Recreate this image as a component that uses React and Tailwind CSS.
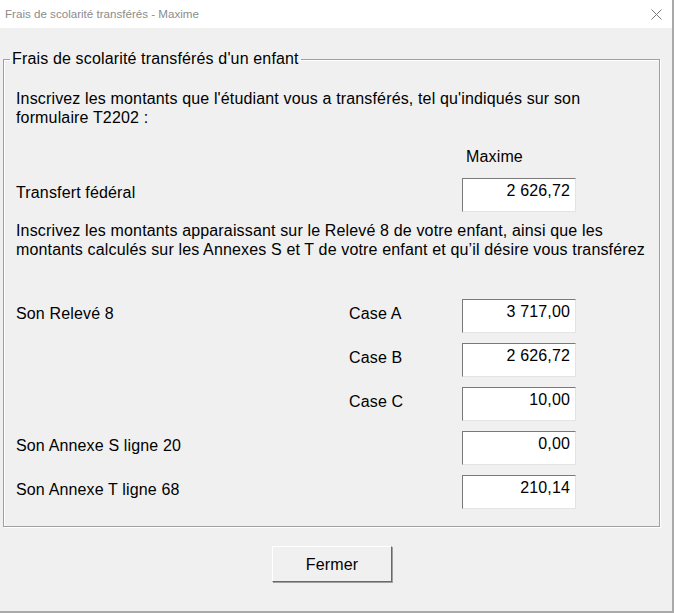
import React from "react";

// ── Data ───────────────────────────────────────────────────────────────────
const ROWS = [
  { label: "Son Relevé 8", sub: "Case A", value: "3 717,00" },
  { label: "", sub: "Case B", value: "2 626,72" },
  { label: "", sub: "Case C", value: "10,00" },
  { label: "Son Annexe S ligne 20", sub: "", value: "0,00" },
  { label: "Son Annexe T ligne 68", sub: "", value: "210,14" },
];

const FONT = "font-['Liberation_Sans',Arial,sans-serif]";

// ── Sub-components ─────────────────────────────────────────────────────────

function AmountBox({ value }) {
  return (
    <div className="w-[114px] h-[34px] bg-white border border-t-[#7a7a7a] border-l-[#7a7a7a] border-b-[#e3e3e3] border-r-[#e3e3e3] pt-[2px] pr-[5px] text-right leading-[19px] shrink-0">
      {value}
    </div>
  );
}

function Row({ label, sub, value, className = "" }) {
  return (
    <div className={`flex items-start ${className}`}>
      <div className="w-[333px] pt-[5px] leading-[19px] whitespace-nowrap">{label}</div>
      <div className="w-[113px] pt-[5px] leading-[19px] whitespace-nowrap">{sub}</div>
      <AmountBox value={value} />
    </div>
  );
}

function CloseIcon() {
  return (
    <svg width="11" height="11" viewBox="0 0 11 11" fill="none">
      <path d="M0.5 0.5L10.5 10.5M10.5 0.5L0.5 10.5" stroke="#7a7a7a" strokeWidth="1" />
    </svg>
  );
}

// ── Main ───────────────────────────────────────────────────────────────────

export default function App() {
  return (
    <div className={`w-[674px] h-[613px] flex flex-col bg-[#f0f0f0] border-r-2 border-b-2 border-[#a9a9a9] text-black text-[16px] tracking-[0.15px] ${FONT}`}>

      {/* ── Title bar ── */}
      <div className="h-[28px] bg-white flex items-center justify-between pl-[5px] pr-[10px] shrink-0">
        <span className="text-[11.6px] tracking-normal text-[#8c8c8c] leading-none">
          Frais de scolarité transférés - Maxime
        </span>
        <CloseIcon />
      </div>

      {/* ── Group box ── */}
      <fieldset className="mt-[21px] ml-[3px] w-[657px] border border-[#a0a0a0] shadow-[1px_1px_0_#ffffff,inset_1px_1px_0_#ffffff] px-0 pb-[17px]">
        <legend className="ml-[6px] px-[2px] leading-[20px]">
          Frais de scolarité transférés d'un enfant
        </legend>

        <div className="pl-[12px] flex flex-col">
          <p className="mt-[20px] leading-[19px] whitespace-nowrap">
            Inscrivez les montants que l'étudiant vous a transférés, tel qu'indiqués sur son
            <br />
            formulaire T2202 :
          </p>

          <div className="mt-[20px] ml-[450px] leading-[19px]">Maxime</div>

          <div className="mt-[12px] flex items-start">
            <div className="w-[446px] pt-[5px] leading-[19px]">Transfert fédéral</div>
            <AmountBox value="2 626,72" />
          </div>

          <p className="mt-[9px] leading-[19px] whitespace-nowrap">
            Inscrivez les montants apparaissant sur le Relevé 8 de votre enfant, ainsi que les
            <br />
            montants calculés sur les Annexes S et T de votre enfant et qu’il désire vous transférez
          </p>

          <div className="mt-[40px] flex flex-col gap-[10px]">
            {ROWS.map((r, i) => (
              <Row key={i} {...r} />
            ))}
          </div>
        </div>
      </fieldset>

      {/* ── Footer ── */}
      <div className="mt-[19px] ml-[272px]">
        <button className="w-[120px] h-[36px] bg-[#f0f0f0] border border-t-white border-l-white border-b-[#696969] border-r-[#696969] shadow-[1px_1px_0_#a0a0a0] leading-[19px]">
          Fermer
        </button>
      </div>
    </div>
  );
}
